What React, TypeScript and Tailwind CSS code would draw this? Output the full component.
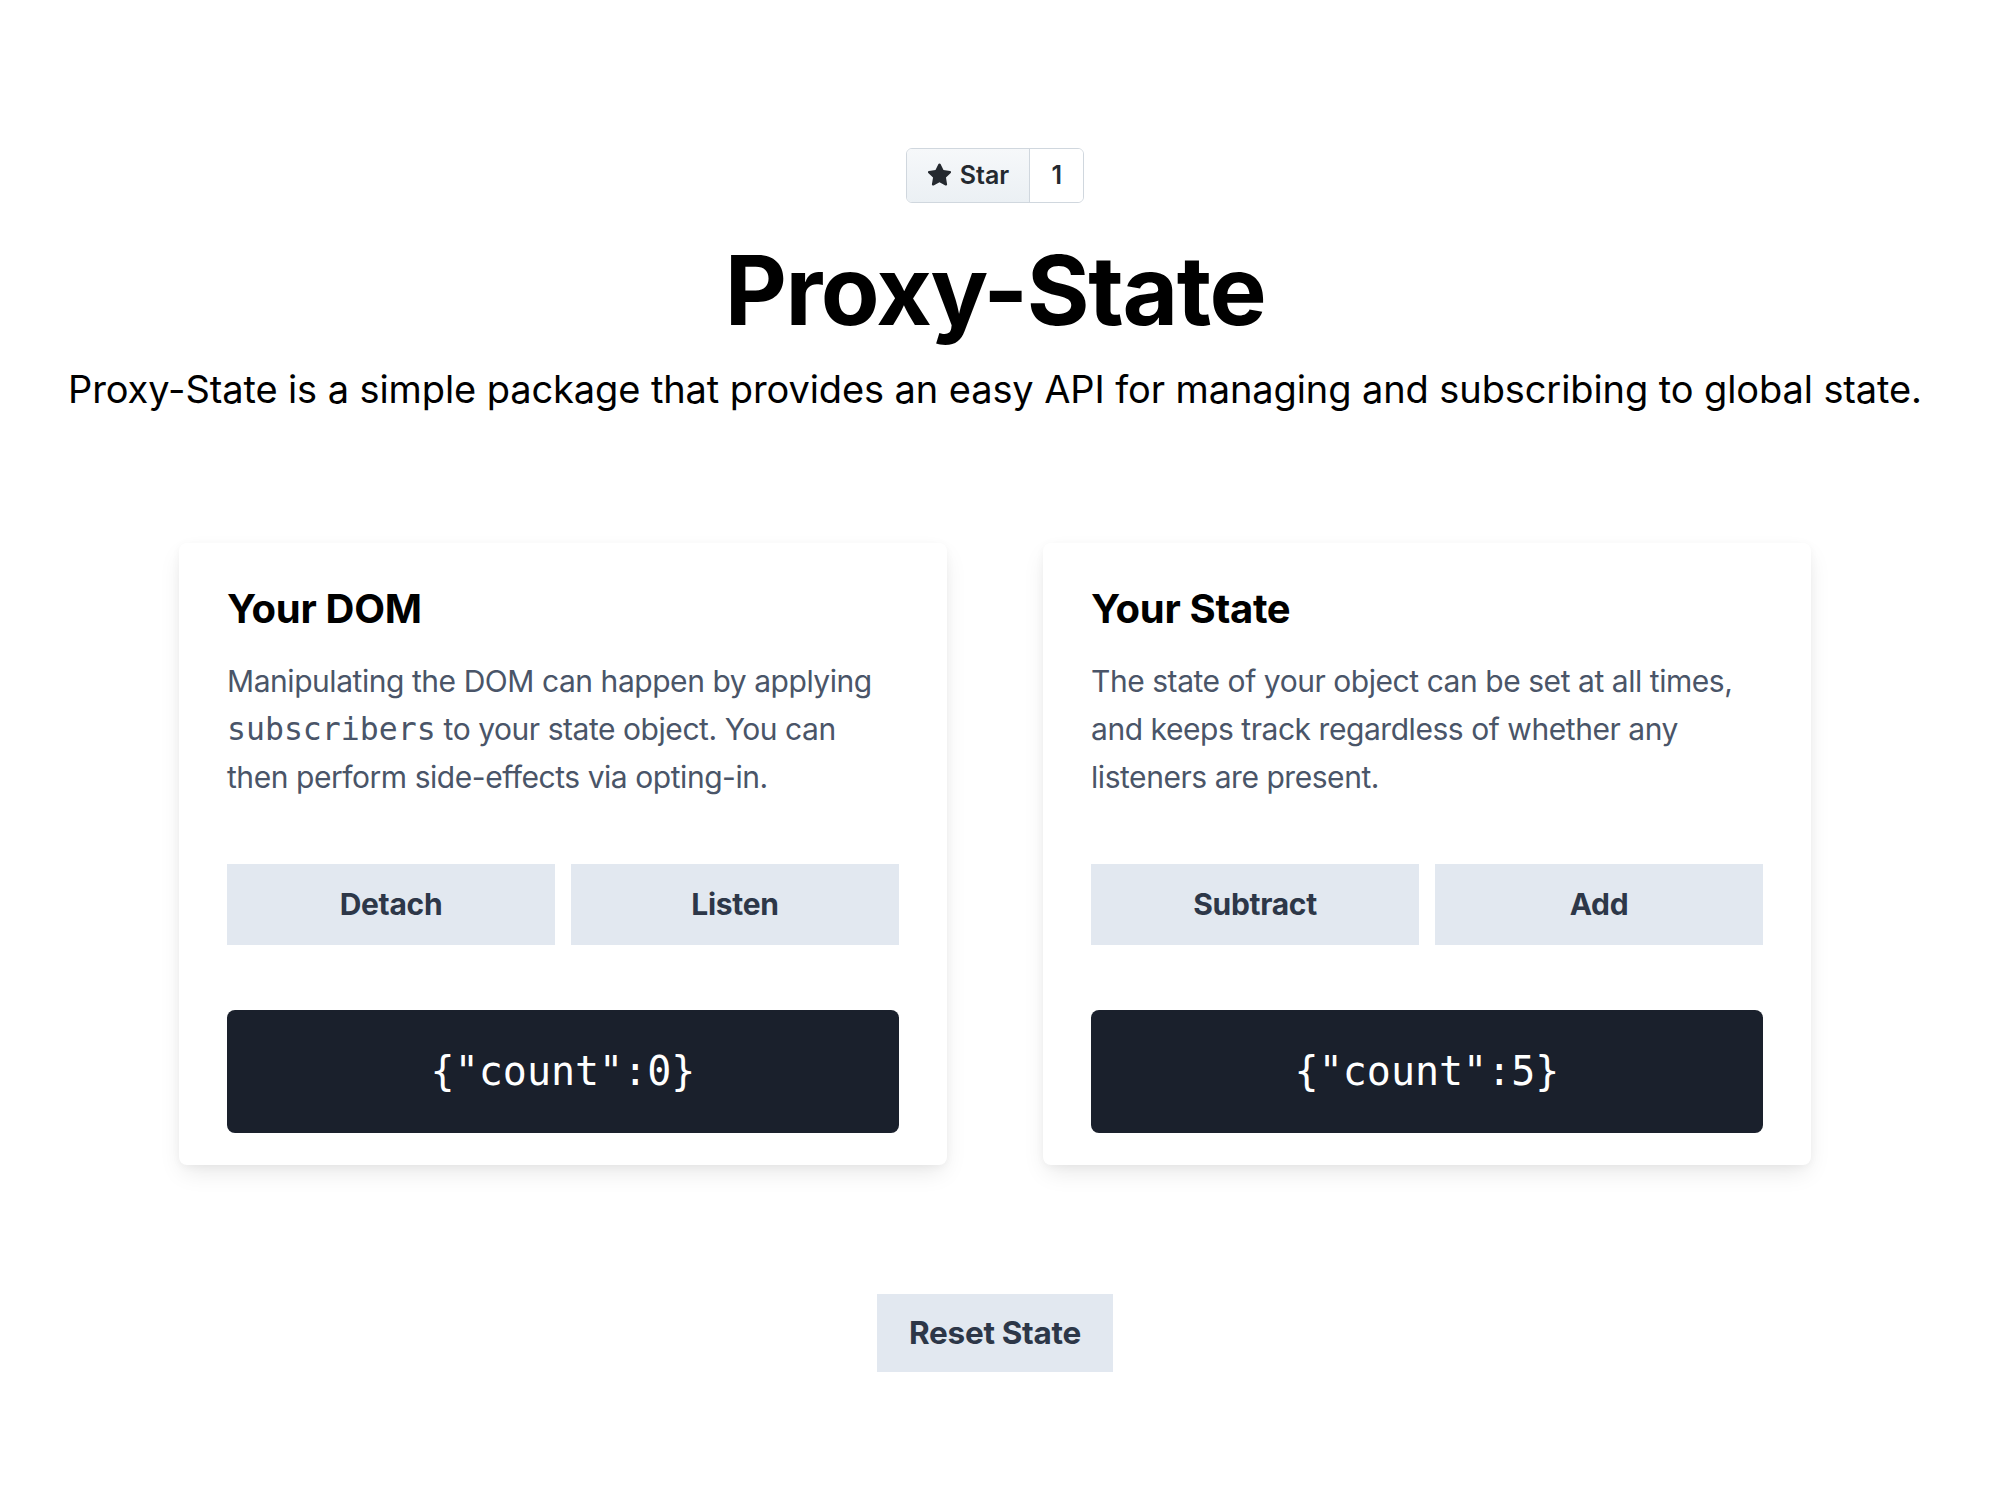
import React, { useState } from 'react';

const StarIcon = () => (
  <svg viewBox="0 0 16 16" className="w-[25px] h-[25px] fill-[#24292f]">
    <path d="M8 .25a.75.75 0 0 1 .673.418l1.882 3.815 4.21.612a.75.75 0 0 1 .416 1.279l-3.046 2.97.719 4.192a.751.751 0 0 1-1.088.791L8 12.347l-3.766 1.98a.75.75 0 0 1-1.088-.79l.72-4.194L.818 6.374a.75.75 0 0 1 .416-1.28l4.21-.611L7.327.668A.75.75 0 0 1 8 .25Z" />
  </svg>
);

const Btn = ({ label, onClick }: { label: string; onClick?: () => void }) => (
  <button
    onClick={onClick}
    className="flex-1 bg-[#e2e8f0] text-[#2d3748] text-[30px] font-bold leading-[37px] py-[22px] tracking-[-0.3px]"
  >
    {label}
  </button>
);

const Card = ({
  title,
  children,
  left,
  right,
  state,
}: {
  title: string;
  children: React.ReactNode;
  left: string;
  right: string;
  state: object;
}) => (
  <div className="w-[768px] bg-white rounded-lg shadow-[0_10px_24px_-4px_rgba(0,0,0,0.10),0_2px_8px_rgba(0,0,0,0.04)] px-12 pt-[43px] pb-8 flex flex-col">
    <h2 className="text-[40px] leading-[46px] font-bold text-black tracking-[-0.3px]">{title}</h2>
    <p className="mt-[25px] text-[30px] leading-[48px] text-[#4a5568] tracking-[-0.45px]">{children}</p>
    <div className="flex gap-4 mt-[63px]">
      <Btn label={left} />
      <Btn label={right} />
    </div>
    <div className="mt-[65px] bg-[#1a202c] rounded-lg py-[38px] text-center text-white text-[40px] leading-[47px] font-['DejaVu_Sans_Mono',monospace]">
      {JSON.stringify(state)}
    </div>
  </div>
);

export default function App() {
  const [dom, setDom] = useState({ count: 0 });
  const [state, setState] = useState({ count: 5 });

  return (
    <div className="w-[1990px] min-h-[1504px] bg-white font-['Inter','Liberation_Sans',sans-serif] flex flex-col items-center pt-[148px]">
      <div className="flex h-[55px] border border-[#d0d7de] rounded-[6px] overflow-hidden text-[#24292f]">
        <div className="flex items-center gap-2 px-[20px] bg-gradient-to-b from-[#f6f8fa] to-[#ebf0f4] border-r border-[#d0d7de]">
          <StarIcon />
          <span className="text-[25px] font-semibold">Star</span>
        </div>
        <div className="w-[53px] flex items-center justify-center bg-white text-[25px] font-semibold">1</div>
      </div>

      <h1 className="mt-[39px] text-[96px] leading-[96px] font-bold text-black tracking-[-1.4px]">Proxy-State</h1>
      <p className="mt-[31px] text-[38px] leading-[40px] text-black tracking-[-0.1px]">
        Proxy-State is a simple package that provides an easy API for managing and subscribing to global state.
      </p>

      <div className="mt-[134px] flex gap-24">
        <Card title="Your DOM" left="Detach" right="Listen" state={dom}>
          Manipulating the DOM can happen by applying{' '}
          <code className="font-['DejaVu_Sans_Mono',monospace] text-[31.5px] tracking-normal">subscribers</code> to your state
          object. You can then perform side-effects via opting-in.
        </Card>
        <Card title="Your State" left="Subtract" right="Add" state={state}>
          The state of your object can be set at all times, and keeps track regardless of whether any listeners are
          present.
        </Card>
      </div>

      <button
        onClick={() => {
          setDom({ count: 0 });
          setState({ count: 0 });
        }}
        className="mt-[129px] bg-[#e2e8f0] text-[#2d3748] text-[31.5px] font-bold leading-[36px] px-8 py-[21px] tracking-[-0.3px]"
      >
        Reset State
      </button>
    </div>
  );
}
